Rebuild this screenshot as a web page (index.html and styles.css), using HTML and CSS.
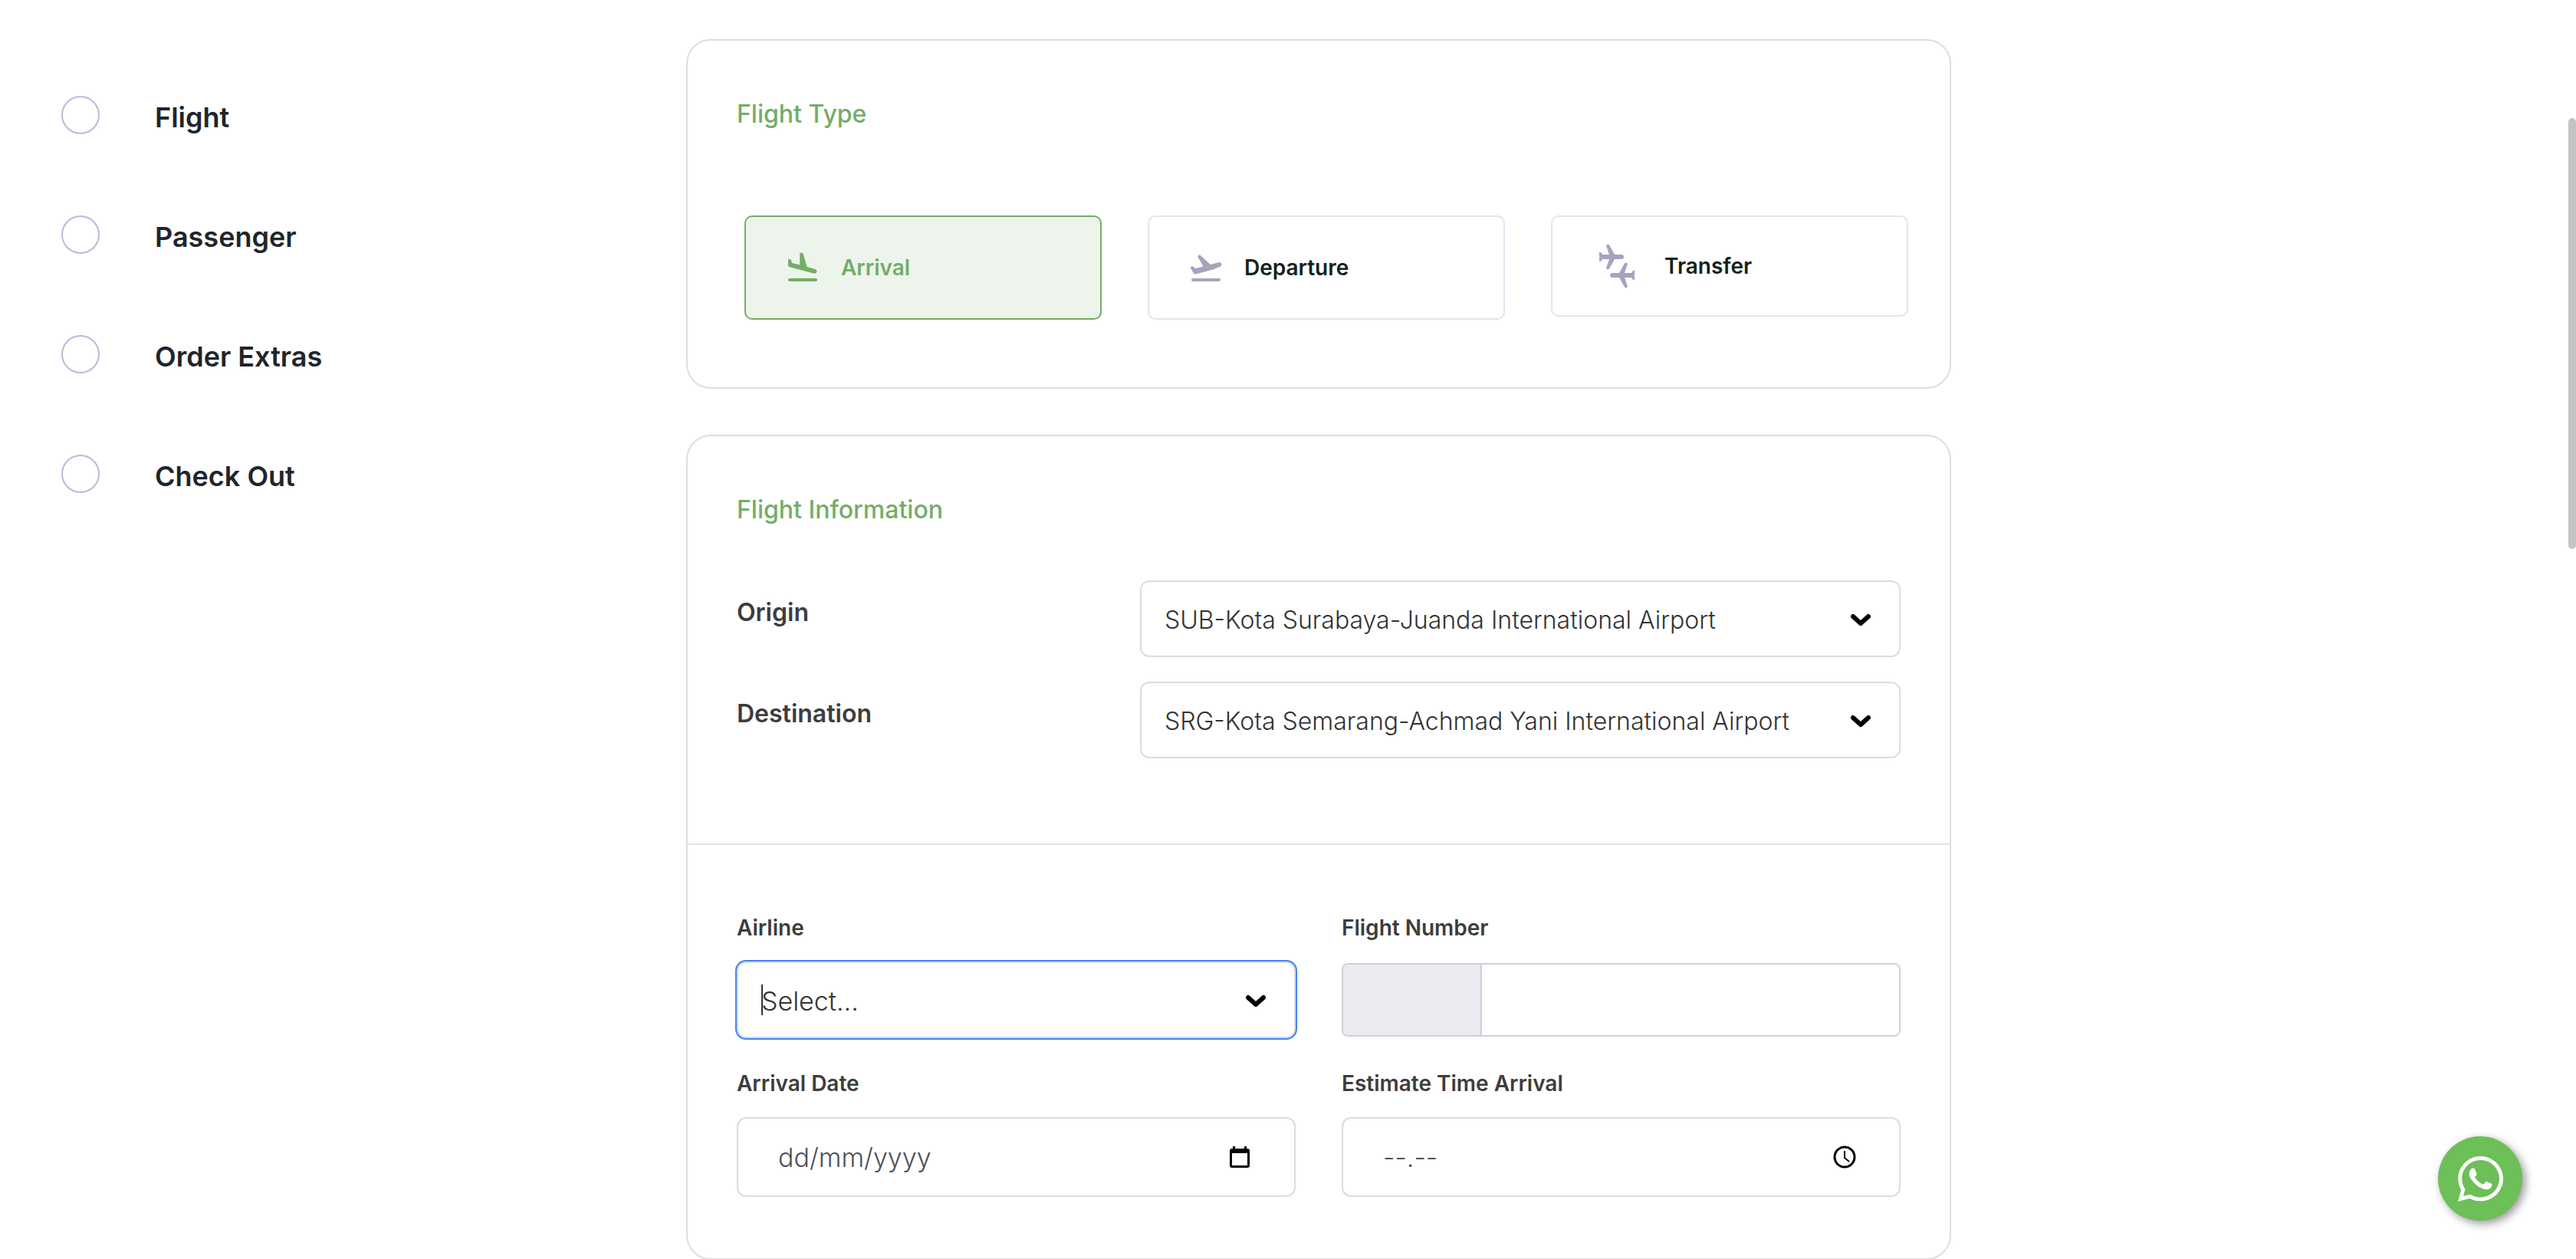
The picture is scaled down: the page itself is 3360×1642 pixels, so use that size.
FILE: index.html
```html
<!DOCTYPE html>
<html lang="en">
<head>
<meta charset="utf-8">
<title>Flight booking</title>
<link rel="stylesheet" href="styles.css">
</head>
<body>
<div class="layout">
  <nav class="steps" aria-label="Booking steps">
    <ol class="step-list">
      <li class="step"><span class="step-dot"></span><span class="step-name">Flight</span></li>
      <li class="step"><span class="step-dot"></span><span class="step-name">Passenger</span></li>
      <li class="step"><span class="step-dot"></span><span class="step-name">Order Extras</span></li>
      <li class="step"><span class="step-dot"></span><span class="step-name">Check Out</span></li>
    </ol>
  </nav>

  <main class="content">
    <section class="card type-card">
      <h2 class="card-title">Flight Type</h2>
      <div class="options">
        <button type="button" class="option option-active" aria-pressed="true">
          <svg class="option-icon" viewBox="0 0 24 24" aria-hidden="true"><path d="M20.5 19h-17c-.55 0-1 .45-1 1s.45 1 1 1h17c.55 0 1-.45 1-1s-.45-1-1-1z"/><path d="M3.51 11.61l15.83 4.24c.8.21 1.62-.26 1.84-1.06.21-.8-.26-1.62-1.06-1.84l-5.31-1.42-2.5-8.45c-.1-.4-.4-.7-.8-.8-.7-.2-1.39.3-1.39 1v7L5.15 8.95l-.75-1.85c-.12-.3-.38-.53-.7-.61l-.3-.08c-.46-.12-.9.22-.9.69v3.22c0 .6.4 1.13 1.01 1.29z"/></svg>
          <span>Arrival</span>
        </button>
        <button type="button" class="option" aria-pressed="false">
          <svg class="option-icon" viewBox="0 0 24 24" aria-hidden="true"><path d="M20.5 19h-17c-.55 0-1 .45-1 1s.45 1 1 1h17c.55 0 1-.45 1-1s-.45-1-1-1z"/><path d="M22.07 9.64c-.21-.8-1.04-1.28-1.84-1.06L14.92 10 8.46 3.98c-.27-.26-.66-.35-1.02-.25-.68.19-1 .97-.65 1.58l3.44 5.96-4.97 1.33-1.57-1.24c-.25-.19-.57-.26-.88-.18l-.33.09c-.46.12-.67.65-.43 1.06l1.88 3.25c.31.54.95.81 1.56.64l6.4-1.72 4.35-1.16L21 11.49c.81-.23 1.28-1.05 1.07-1.85z"/></svg>
          <span>Departure</span>
        </button>
        <button type="button" class="option option-transfer" aria-pressed="false">
          <svg class="transfer-icon" viewBox="105 84 210 174" aria-hidden="true"><defs><path id="plane" d="M137 120q0-4 5-4 4 1 8 10h27L166 94q-2-7 6-8 4 0 6 4L198 126H226q8 1 8 9t-8 9H198L178 180q-2 4-6 4-8-1-6-8L177 144H150q-4 9-8 9-5 0-5-4l2-14z"/></defs><use href="#plane"/><use href="#plane" transform="translate(414 72) scale(-1 1)"/></svg>
          <span>Transfer</span>
        </button>
      </div>
    </section>

    <form class="card">
      <div class="route">
        <h2 class="card-title">Flight Information</h2>
        <div class="route-rows">
          <div class="route-row">
            <label class="route-label" for="origin">Origin</label>
            <div class="select-wrap">
              <select class="field select" id="origin"><option>SUB-Kota Surabaya-Juanda International Airport</option></select>
              <svg class="chevron" viewBox="0 0 28 17" aria-hidden="true"><path d="M4 4l10 9L24 4"/></svg>
            </div>
          </div>
          <div class="route-row">
            <label class="route-label" for="destination">Destination</label>
            <div class="select-wrap">
              <select class="field select" id="destination"><option>SRG-Kota Semarang-Achmad Yani International Airport</option></select>
              <svg class="chevron" viewBox="0 0 28 17" aria-hidden="true"><path d="M4 4l10 9L24 4"/></svg>
            </div>
          </div>
        </div>
      </div>
      <div class="details">
        <div class="detail">
          <label class="detail-label" for="airline">Airline</label>
          <div class="select-wrap select-caret">
            <select class="field select select-focused" id="airline"><option>Select...</option></select>
            <svg class="chevron" viewBox="0 0 28 17" aria-hidden="true"><path d="M4 4l10 9L24 4"/></svg>
          </div>
        </div>
        <div class="detail">
          <label class="detail-label" for="flight-number">Flight Number</label>
          <div class="number-group">
            <span class="number-prefix"></span>
            <input class="number-input" id="flight-number" type="text">
          </div>
        </div>
        <div class="detail">
          <label class="detail-label" for="arrival-date">Arrival Date</label>
          <div class="field picker">
            <input class="picker-input" id="arrival-date" type="text" placeholder="dd/mm/yyyy">
            <button type="button" class="picker-button" aria-label="Pick a date"><svg class="picker-icon" viewBox="0 0 30 30" aria-hidden="true"><path fill-rule="evenodd" d="M6 1h3v3h12V1h3v3h1q3 0 3 3v19q0 3-3 3H5q-3 0-3-3V7q0-3 3-3h1zM5 10v16h20V10z"/></svg></button>
          </div>
        </div>
        <div class="detail">
          <label class="detail-label" for="arrival-time">Estimate Time Arrival</label>
          <div class="field picker">
            <input class="picker-input" id="arrival-time" type="text" placeholder="--.--">
            <button type="button" class="picker-button" aria-label="Pick a time"><svg class="picker-icon picker-icon-line" viewBox="0 0 30 30" aria-hidden="true"><circle cx="15" cy="15" r="13"/><path class="clock-hands" d="M15 7v9l6 5"/></svg></button>
          </div>
        </div>
      </div>
    </form>
  </main>
</div>

<a class="whatsapp" href="#" aria-label="Chat on WhatsApp">
  <svg class="whatsapp-icon" viewBox="0 32 448 448" aria-hidden="true"><path d="M380.9 97.1C339 55.1 283.2 32 223.9 32c-122.4 0-222 99.6-222 222 0 39.1 10.2 77.3 29.6 111L0 480l117.7-30.9c32.4 17.7 68.9 27 106.1 27h.1c122.3 0 224.1-99.6 224.1-222 0-59.3-25.2-115-67.1-157zm-157 341.6c-33.2 0-65.7-8.9-94-25.7l-6.7-4-69.8 18.3L72 359.2l-4.4-7c-18.5-29.4-28.2-63.3-28.2-98.2 0-101.7 82.8-184.5 184.6-184.5 49.3 0 95.6 19.2 130.4 54.1 34.8 34.9 56.2 81.2 56.1 130.5 0 101.8-84.9 184.6-186.6 184.6zm101.2-138.2c-5.5-2.8-32.8-16.2-37.9-18-5.1-1.9-8.8-2.8-12.5 2.8-3.7 5.6-14.3 18-17.6 21.8-3.2 3.7-6.5 4.2-12 1.4-32.6-16.3-54-29.1-75.5-66-5.7-9.8 5.7-9.1 16.3-30.3 1.8-3.7.9-6.9-.5-9.7-1.4-2.8-12.5-30.1-17.1-41.2-4.5-10.8-9.1-9.3-12.5-9.5-3.2-.2-6.9-.2-10.6-.2-3.7 0-9.7 1.4-14.8 6.9-5.1 5.6-19.4 19-19.4 46.3 0 27.3 19.9 53.7 22.6 57.4 2.8 3.7 39.1 59.7 94.8 83.8 35.2 15.2 49 16.5 66.6 13.9 10.7-1.6 32.8-13.4 37.4-26.4 4.6-13 4.6-24.1 3.2-26.4-1.3-2.5-5-3.9-10.5-6.6z"/></svg>
</a>
<div class="scroll-thumb" aria-hidden="true"></div>
</body>
</html>
```
FILE: styles.css
```css
* { box-sizing: border-box; }

html { scrollbar-width: none; }

body {
  margin: 0;
  background: #fff;
  color: #212529;
  font-family: Inter, "Open Sans", sans-serif;
  font-size: 32px;
  line-height: 40px;
}

button, input, select { font: inherit; }

.layout {
  display: grid;
  grid-template-columns: 815fr 1650fr 815fr;
  padding: 51px 0 0 80px;
}

.step-list {
  display: grid;
  gap: 106px;
  margin: 0;
  padding: 74px 0 0;
  list-style: none;
}

.step {
  display: flex;
  align-items: center;
  gap: 72px;
  height: 50px;
}

.step-dot {
  width: 50px;
  height: 50px;
  border: 2px solid #bbb9da;
  border-radius: 50%;
}

.step-name {
  padding-top: 6px;
  font-size: 36px;
  font-weight: 600;
}

.content {
  display: grid;
  gap: 60px;
}

.card {
  border: 2px solid #dedede;
  border-radius: 32px;
}

.type-card { padding: 72px 64px 88px; }

.card-title {
  margin: 0;
  color: #74ad65;
  font-size: 32px;
  font-weight: 500;
  line-height: 48px;
}

.options {
  display: grid;
  grid-template-columns: repeat(3, 1fr);
  align-items: start;
  gap: 60px;
  margin: 108px -10px 0 10px;
}

.option {
  display: flex;
  align-items: center;
  gap: 26px;
  height: 136px;
  padding: 0 50px;
  border: 2px solid #e4e3f0;
  border-radius: 10px;
  background: #fff;
  color: #12231a;
  font-size: 28px;
  font-weight: 600;
}

.option-active {
  border-color: #74ad65;
  background: #edf4ec;
  color: #74ad65;
}

.option-transfer { height: 132px; }

.option-icon {
  width: 48px;
  height: 48px;
  fill: #a5a4bf;
}

.option-active .option-icon { fill: #74ad65; }

.transfer-icon {
  width: 70px;
  height: 58px;
  fill: #a5a4bf;
}

.route {
  padding: 72px 64px 111px;
  border-bottom: 2px solid #e3e3e3;
}

.route-rows {
  display: grid;
  gap: 32px;
  margin-top: 68px;
}

.route-row {
  display: grid;
  grid-template-columns: 466fr 992fr;
  gap: 60px;
}

.route-label {
  padding-top: 22px;
  color: #3d3d3d;
  font-weight: 600;
}

.field {
  width: 100%;
  border: 2px solid #dcdcdc;
  border-radius: 12px;
  background: #fff;
}

.select-wrap { position: relative; }

.select {
  display: block;
  height: 100px;
  padding: 4px 80px 0 30px;
  appearance: none;
  color: #333;
  font-weight: 300;
}

.select-focused {
  box-shadow: 0 0 0 2px #4285f4;
  font-size: 34px;
}

.select-caret::before {
  content: "";
  position: absolute;
  top: 30px;
  left: 32px;
  width: 2px;
  height: 40px;
  background: #333;
}

.chevron {
  position: absolute;
  top: 43px;
  right: 38px;
  width: 28px;
  height: 17px;
  fill: none;
  stroke: #000;
  stroke-width: 6;
  stroke-linecap: round;
  stroke-linejoin: round;
  pointer-events: none;
}

.details {
  display: grid;
  grid-template-columns: 1fr 1fr;
  gap: 39px 60px;
  padding: 88px 64px 80px;
}

.detail-label {
  display: block;
  margin-bottom: 24px;
  color: #3d3d3d;
  font-size: 28px;
  font-weight: 600;
}

.number-group {
  display: flex;
  height: 96px;
  margin-top: 26px;
  overflow: hidden;
  border: 2px solid #cbd1d6;
  border-radius: 8px;
}

.number-prefix {
  flex: none;
  width: 25%;
  border-right: 2px solid #cbd1d6;
  background: #eaebf0;
}

.number-input {
  flex: 1;
  min-width: 0;
  padding: 0 24px;
  border: 0;
  background: #fff;
}

.picker {
  display: flex;
  align-items: center;
  height: 104px;
  padding: 0 56px 0 52px;
}

.picker-input {
  flex: 1;
  min-width: 0;
  padding: 2px 0 0;
  border: 0;
  background: none;
  font-size: 34px;
  font-weight: 300;
}

.picker-input::placeholder { color: #4d5157; }

.picker-button {
  display: flex;
  padding: 0;
  border: 0;
  background: none;
}

.picker-icon {
  width: 30px;
  height: 30px;
}

.picker-icon-line {
  fill: none;
  stroke: #000;
  stroke-width: 3;
}

.clock-hands { stroke-width: 2; }

.whatsapp {
  position: fixed;
  right: 70px;
  bottom: 50px;
  display: grid;
  place-items: center;
  width: 110px;
  height: 110px;
  border-radius: 50%;
  background: #6dbf58;
  box-shadow: 4px 4px 12px #999;
}

.whatsapp-icon {
  width: 59px;
  height: 59px;
  fill: #fff;
}

.scroll-thumb {
  position: fixed;
  top: 154px;
  right: 0;
  width: 10px;
  height: 562px;
  border-radius: 5px;
  background: #c3c3c3;
}
```
